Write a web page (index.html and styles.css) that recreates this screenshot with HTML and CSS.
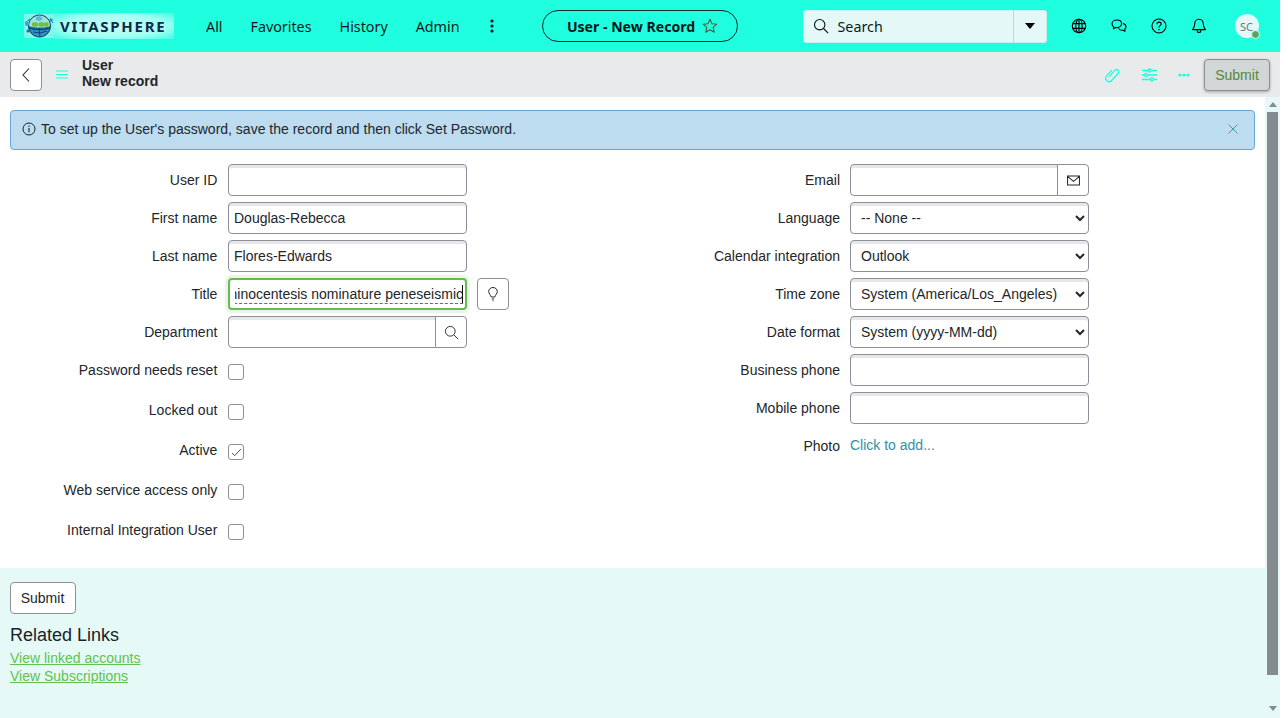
FILE: index.html
```html
<!DOCTYPE html>
<html lang="en">
<head>
<meta charset="utf-8">
<title>User - New Record</title>
<link rel="stylesheet" href="styles.css">
</head>
<body>
<div class="app">
  <header class="topbar">
    <div class="brand">
      <svg class="globe" viewBox="0 0 30 24" width="30" height="24" aria-hidden="true">
        <circle cx="15.500" cy="12" r="11" fill="#1b6f9e"/>
        <path d="M5 8c3-5 7-7 10.500-7S23 3 26 8l.5 4c-6 2-15 2-21.500 0z" fill="#9fe3d2"/>
        <path d="M6 15c6 2 13 2 19 0-1.500 5-6 8-9.500 8S7.500 20 6 15z" fill="#2d93cf"/>
        <path d="M8 9l3-1 3 1v3l-3 1-3-1zM14.500 9l3-1 3 1v3l-3 1-3-1zM20.500 9l2-1 2 1v3l-2 1-2-1z" fill="#6cc23f"/>
        <path d="M12 3l3-1 3 1v3l-3 1-3-1z" fill="#5bb7e6"/>
        <path d="M15.500 1a11 11 0 1 0 .01 0M5 14c6 2 15 2 21 0M9 18l7 1 7-2M15 14l1 9" fill="none" stroke="#0d3b5c" stroke-width=".9"/>
        <path d="M1 9l5-4M26 5l3 4" stroke="#16506f" stroke-width=".8"/>
        <circle cx="3" cy="10" r="2" fill="#3aa3d8"/><circle cx="27" cy="6" r="1.800" fill="#2d93cf"/><circle cx="4" cy="17" r="1.500" fill="#1b6f9e"/>
      </svg>
      <span class="wordmark">VITASPHERE</span>
    </div>
    <nav class="nav">
      <a class="nav-item">All</a>
      <a class="nav-item">Favorites</a>
      <a class="nav-item">History</a>
      <a class="nav-item">Admin</a>
      <svg class="nav-more" viewBox="0 0 4 14" width="4" height="14" aria-hidden="true"><circle cx="2" cy="2" r="1.600"/><circle cx="2" cy="7" r="1.600"/><circle cx="2" cy="12" r="1.600"/></svg>
    </nav>
    <div class="pill">
      <span>User - New Record</span>
      <svg viewBox="0 0 16 16" width="16" height="16" aria-hidden="true"><path d="M8 1.200l2 4.500 4.800.5-3.600 3.200 1 4.800L8 11.800l-4.200 2.400 1-4.800L1.200 6.200 6 5.700z" fill="none" stroke="#4f5b3e" stroke-width="1.100" stroke-linejoin="round"/></svg>
    </div>
    <div class="search">
      <div class="search-main">
        <svg viewBox="0 0 16 16" width="16" height="16" aria-hidden="true"><circle cx="6.700" cy="6.700" r="5.200" fill="none" stroke="#111" stroke-width="1.100"/><path d="M10.500 10.500l4.700 4.700" stroke="#111" stroke-width="1.100"/></svg>
        <span>Search</span>
      </div>
      <div class="search-drop"><span class="tri"></span></div>
    </div>
    <div class="tools">
      <svg viewBox="0 0 16 16" width="16" height="16" aria-hidden="true"><g fill="none" stroke="#000" stroke-width="1.100"><circle cx="8" cy="8" r="6.700"/><ellipse cx="8" cy="8" rx="3.200" ry="6.700"/><path d="M1.800 5.600h12.400M1.800 10.400h12.400M8 1.300v13.400"/></g></svg>
      <svg viewBox="0 0 16 16" width="16" height="16" aria-hidden="true"><g fill="none" stroke="#000" stroke-width="1.100" stroke-linejoin="round"><path d="M5.800 2C3 2 1 3.600 1 5.800c0 1.300.7 2.300 1.700 3l-.3 2 2.200-1.200c2.900.5 6-1.200 6-3.800C10.600 3.600 8.600 2 5.800 2z"/><path d="M11.900 5.500c1.900.4 3.100 1.700 3.100 3.300 0 1-.5 1.900-1.300 2.500l.3 2-2-1.100c-1.800.3-3.600-.4-4.500-1.700"/></g></svg>
      <svg viewBox="0 0 16 16" width="16" height="16" aria-hidden="true"><circle cx="8" cy="8" r="7" fill="none" stroke="#000" stroke-width="1.100"/><path d="M5.900 6.200c0-1.300 1-2.100 2.200-2.100s2.100.8 2.100 1.900c0 1.700-2.200 1.600-2.200 3.500" fill="none" stroke="#000" stroke-width="1.100"/><circle cx="8" cy="11.600" r=".8"/></svg>
      <svg viewBox="0 0 16 16" width="16" height="16" aria-hidden="true"><path d="M8 1.300c-2.700 0-4.300 2-4.300 4.600 0 3.200-1.600 4.700-2.200 5.700h13c-.6-1-2.200-2.500-2.200-5.700 0-2.600-1.600-4.600-4.300-4.600zM6.200 12.200c0 1.300.8 2.300 1.800 2.300s1.800-1 1.800-2.300" fill="none" stroke="#000" stroke-width="1.100" stroke-linejoin="round"/></svg>
      <div class="avatar">SC<span class="status"></span></div>
    </div>
  </header>

  <div class="subbar">
    <button class="back" type="button" aria-label="Back"><svg viewBox="0 0 10 16" width="10" height="16" aria-hidden="true"><path d="M8 1.500L2 8l6 6.500" fill="none" stroke="#2a2e33" stroke-width="1.100"/></svg></button>
    <svg class="burger" viewBox="0 0 12 9" width="12" height="9" aria-hidden="true"><path d="M0 1h12M0 4.500h12M0 8h12" stroke="#1fffe0" stroke-width="1"/></svg>
    <div class="crumb"><div>User</div><div>New record</div></div>
    <div class="actions">
      <svg viewBox="0 0 16 16" width="16" height="16" aria-hidden="true"><path transform="rotate(42 8 8)" d="M4.600 4.500v7.800a3.400 3.400 0 0 0 6.800 0V2.600a2.200 2.200 0 0 0-4.400 0v9.200" fill="none" stroke="#1fffe0" stroke-width="1.300"/></svg>
      <svg viewBox="0 0 16 14" width="16" height="14" aria-hidden="true"><g fill="none" stroke="#1fffe0" stroke-width="1.300"><path d="M1 2.500h6M10 2.500h6M1 7h2M6.500 7H16M1 11.500h8.500M12.500 11.500H16"/><circle cx="8.500" cy="2.500" r="1.500"/><circle cx="5" cy="7" r="1.500"/><circle cx="11" cy="11.500" r="1.500"/></g></svg>
      <svg viewBox="0 0 12 4" width="12" height="4" aria-hidden="true"><g fill="#1fffe0"><circle cx="2" cy="2" r="1.600"/><circle cx="6" cy="2" r="1.600"/><circle cx="10" cy="2" r="1.600"/></g></svg>
      <button class="submit-top" type="button">Submit</button>
    </div>
  </div>

  <div class="body">
    <main class="content">
      <div class="alert">
        <svg viewBox="0 0 14 14" width="14" height="14" aria-hidden="true"><circle cx="7" cy="7" r="6" fill="none" stroke="#1d2327" stroke-width="1"/><path d="M7 6v4.200" stroke="#1d2327" stroke-width="1.100"/><circle cx="7" cy="4.200" r=".7" fill="#1d2327"/></svg>
        <span class="alert-text">To set up the User's password, save the record and then click Set Password.</span>
        <svg class="alert-close" viewBox="0 0 10 10" width="10" height="10" aria-hidden="true"><path d="M.5.500l9 9M9.500.500l-9 9" stroke="#2aa5a8" stroke-width="1"/></svg>
      </div>

      <form class="form">
        <div class="col col-left">
          <div class="row"><label class="lbl">User ID</label><input class="field" type="text"></div>
          <div class="row"><label class="lbl">First name</label><input class="field" type="text" value="Douglas-Rebecca"></div>
          <div class="row"><label class="lbl">Last name</label><input class="field" type="text" value="Flores-Edwards"></div>
          <div class="row"><label class="lbl">Title</label>
            <div class="field field-focus"><div class="focus-clip"><span class="focus-text">rhinocentesis nominature peneseismic</span></div></div>
            <button class="tip" type="button" aria-label="Suggestion"><svg viewBox="0 0 12 16" width="12" height="16" aria-hidden="true"><path d="M6 1.500c-2.500 0-4.300 1.800-4.300 4 0 2.200 1.900 3.100 2.500 5.500h3.600c.6-2.400 2.500-3.300 2.500-5.500 0-2.200-1.800-4-4.300-4zM4.800 13h2.400M5.500 14.800h1" fill="none" stroke="#23272b" stroke-width="1"/></svg></button>
          </div>
          <div class="row"><label class="lbl">Department</label>
            <div class="group"><input class="field group-input" type="text"><span class="addon"><svg viewBox="0 0 16 16" width="15" height="15" aria-hidden="true"><circle cx="6.700" cy="6.700" r="5.200" fill="none" stroke="#23272b" stroke-width="1"/><path d="M10.500 10.500l4.700 4.700" stroke="#23272b" stroke-width="1"/></svg></span></div>
          </div>
          <div class="row row-check"><label class="lbl">Password needs reset</label><span class="check"></span></div>
          <div class="row row-check"><label class="lbl">Locked out</label><span class="check"></span></div>
          <div class="row row-check"><label class="lbl">Active</label><span class="check"><svg viewBox="0 0 12 10" width="11" height="9" aria-hidden="true"><path d="M1 5.500l3 3L11 1" fill="none" stroke="#3a3f44" stroke-width="1"/></svg></span></div>
          <div class="row row-check"><label class="lbl">Web service access only</label><span class="check"></span></div>
          <div class="row row-check"><label class="lbl">Internal Integration User</label><span class="check"></span></div>
        </div>
        <div class="col col-right">
          <div class="row"><label class="lbl">Email</label>
            <div class="group"><input class="field group-input" type="text"><span class="addon"><svg viewBox="0 0 16 12" width="15" height="11" aria-hidden="true"><path d="M1.500 1h13v10h-13zM1.500 1.500L8 7l6.500-5.500" fill="none" stroke="#23272b" stroke-width="1.100"/></svg></span></div>
          </div>
          <div class="row"><label class="lbl">Language</label><select class="field sel"><option>-- None --</option></select></div>
          <div class="row"><label class="lbl">Calendar integration</label><select class="field sel"><option>Outlook</option></select></div>
          <div class="row"><label class="lbl">Time zone</label><select class="field sel"><option>System (America/Los_Angeles)</option></select></div>
          <div class="row"><label class="lbl">Date format</label><select class="field sel"><option>System (yyyy-MM-dd)</option></select></div>
          <div class="row"><label class="lbl">Business phone</label><input class="field" type="text"></div>
          <div class="row"><label class="lbl">Mobile phone</label><input class="field" type="text"></div>
          <div class="row row-photo"><label class="lbl">Photo</label><a class="photo-link">Click to add...</a></div>
        </div>
      </form>

      <section class="foot">
        <button class="submit-bottom" type="button">Submit</button>
        <h2 class="related">Related Links</h2>
        <a class="rel-link">View linked accounts</a>
        <a class="rel-link">View Subscriptions</a>
      </section>
    </main>
    <div class="scroll">
      <span class="arrow arrow-up"></span>
      <div class="thumb"></div>
      <span class="arrow arrow-down"></span>
    </div>
  </div>
</div>
</body>
</html>
```
FILE: styles.css
```css
* { box-sizing: border-box; }
html, body { margin: 0; padding: 0; background: #fff; }
body { font-family: "Liberation Sans", Arial, sans-serif; font-size: 14px; color: #22262a; overflow: hidden; }
.app { width: 1280px; height: 718px; display: flex; flex-direction: column; overflow: hidden; }

.topbar { height: 52px; flex: none; background: #1fffe0; display: flex; align-items: center; font-family: "Noto Sans", sans-serif; color: #0c1a1d; }
.brand { display: flex; align-items: center; margin-left: 24px; width: 150px; height: 26px; }
.globe { flex: none; background: #7ff8ea; }
.wordmark { flex: 1; height: 26px; line-height: 26px; padding-left: 6px; font-size: 15px; font-weight: 700; letter-spacing: 1.700px; color: #0e2a4a; background: radial-gradient(ellipse at 50% 50%, #c6fff8 0%, #a4fff3 60%, #3cfbe4 100%); }
.nav { display: flex; align-items: center; margin-left: 32px; gap: 28px; font-size: 14.300px; }
.nav-more { fill: #0c1a1d; margin-left: 2px; }
.pill { margin-left: 48px; width: 196px; height: 32px; border: 1px solid #0b2a2c; border-radius: 16px; padding-left: 6px; display: flex; align-items: center; justify-content: center; gap: 7px; font-weight: 700; font-size: 14.100px; color: #04141a; }
.search { margin-left: 65px; width: 244px; height: 33px; border-radius: 4px; background: #e4f9f7; display: flex; box-shadow: inset 0 0 0 1px #c8efea; font-size: 14.300px; }
.search-main { flex: 1; display: flex; align-items: center; gap: 9px; padding-left: 10px; }
.search-drop { width: 34px; border-left: 1px solid #c5d6d4; display: flex; align-items: center; justify-content: center; }
.tri { width: 0; height: 0; border-left: 5.500px solid transparent; border-right: 5.500px solid transparent; border-top: 6px solid #000; }
.tools { margin-left: 24px; display: flex; align-items: center; gap: 24px; }
.avatar { position: relative; width: 24px; height: 24px; margin-left: 4px; border-radius: 50%; background: #e4f9f7; color: #6c7478; font-size: 11px; display: flex; align-items: center; justify-content: center; }
.status { position: absolute; right: -1px; bottom: -1px; width: 9px; height: 9px; border-radius: 50%; background: #4ea866; border: 1.500px solid #e4f9f7; }

.subbar { height: 45px; flex: none; background: #e9eaec; display: flex; align-items: center; padding: 0 10px; }
.back { width: 32px; height: 32px; background: #fff; border: 1px solid #8d8f93; border-radius: 4px; padding: 0; display: flex; align-items: center; justify-content: center; }
.burger { margin-left: 14px; flex: none; }
.crumb { margin: -4px 0 0 14px; font-weight: 700; font-size: 14px; line-height: 16px; color: #22262a; }
.actions { margin-left: auto; display: flex; align-items: center; gap: 21px; }
.submit-top { width: 66px; height: 32px; margin-left: -7px; background: #d3d6d7; border: 1px solid #8b8f90; border-radius: 4px; color: #4f8a3c; font: 14px "Liberation Sans", sans-serif; box-shadow: 0 1px 3px rgba(0,0,0,.3); padding: 0; }

.body { flex: 1; display: flex; min-height: 0; }
.content { flex: 1; min-width: 0; display: flex; flex-direction: column; }
.alert { margin: 13px 10px 0; height: 40px; background: #bddcf0; border: 1px solid #6aa5d8; border-radius: 4px; display: flex; align-items: center; padding: 0 16px 2px 11px; gap: 5px; }
.alert-close { margin-left: auto; }

.form { flex: none; height: 418px; padding-top: 14px; display: flex; }
.col { display: flex; flex-direction: column; }
.col-left { width: 615px; }
.col-right { flex: 1; }
.row { display: flex; align-items: center; height: 32px; margin-bottom: 6px; flex: none; }
.lbl { flex: none; text-align: right; padding-right: 10.700px; margin-top: -1px; }
.col-left .lbl { width: 228px; }
.col-right .lbl { width: 235px; padding-right: 10px; }
.field { width: 239px; height: 32px; flex: none; border: 1px solid #8d8f9c; border-radius: 4px; background: #fff; box-shadow: inset 0 3px 0 #e6e7e8; padding: 0 5px; font: 14px "Liberation Sans", sans-serif; color: #22262a; outline: none; }
.field-focus { border: 2px solid #66bb50; box-shadow: 0 0 0 3px rgba(102,187,80,.14); padding: 0 2px 0 5px; }
.focus-clip { height: 100%; display: flex; justify-content: flex-end; align-items: center; overflow: hidden; white-space: nowrap; }
.focus-text { position: relative; flex: none; text-decoration: underline dashed #e33; text-decoration-thickness: 1px; text-underline-offset: 4px; line-height: 18px; }
.focus-text::after { content: ""; position: absolute; right: 0; top: 0; bottom: 0; width: 1px; background: #111; }
.tip { width: 32px; height: 32px; margin-left: 10px; background: #fff; border: 1px solid #8d8f93; border-radius: 4px; padding: 0; display: flex; align-items: center; justify-content: center; }
.group { display: flex; width: 239px; height: 32px; flex: none; }
.group-input { flex: 1; width: auto; min-width: 0; border-radius: 4px 0 0 4px; }
.addon { width: 32px; flex: none; background: #fff; border: 1px solid #8d8f9c; margin-left: -1px; border-radius: 0 4px 4px 0; display: flex; align-items: center; justify-content: center; }
.sel { padding: 0 0 0 6px; }
.row-check { margin-bottom: 8px; align-items: flex-start; }
.row:not(.row-check) + .row-check { margin-top: 10px; }
.row-check .lbl { line-height: 16px; margin-top: -2px; }
.check { width: 16px; height: 16px; border: 1px solid #8d8f9c; border-radius: 3px; background: #fff; display: flex; align-items: center; justify-content: center; }
.row-photo { height: 30px; }
.row-photo .lbl { margin-top: 1px; }
.photo-link { color: #2e92a6; }

.foot { flex: 1; background: #e5faf7; padding: 14px 10px 0; display: flex; flex-direction: column; align-items: flex-start; }
.submit-bottom { width: 66px; height: 32px; background: #fff; border: 1px solid #8d8f93; border-radius: 4px; font: 14px "Liberation Sans", sans-serif; color: #22262a; padding: 0 1px 0 0; }
.related { margin: 10px 0 3px; font-size: 18px; font-weight: 400; line-height: 22px; color: #1b2227; }
.rel-link { color: #62c150; text-decoration: underline; line-height: 18px; }

.scroll { width: 15px; flex: none; background: #e5faf7; display: flex; flex-direction: column; align-items: center; padding-top: 5px; }
.thumb { width: 11px; height: 563px; margin-top: 5px; background: #858b8f; }
.arrow { width: 0; height: 0; border-left: 4px solid transparent; border-right: 4px solid transparent; flex: none; }
.arrow-up { border-bottom: 5px solid #858b8f; }
.arrow-down { border-top: 5px solid #858b8f; margin-top: 31px; }
```
